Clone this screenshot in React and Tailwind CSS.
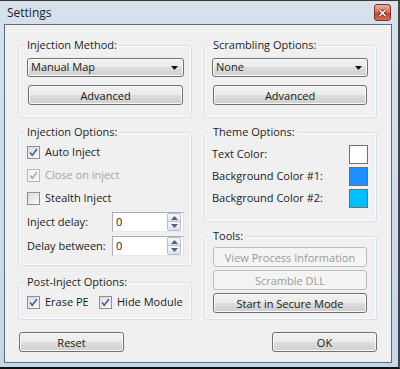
import React from 'react';

const btnBase =
    'flex items-center justify-center rounded-[3px] border text-[11px] leading-none';
const btnOn =
    'border-[#707070] text-[#1b1b1b] bg-[linear-gradient(#f2f2f2_0%,#ebebeb_50%,#dddddd_50%,#cfcfcf_100%)] shadow-[inset_0_0_0_1px_#fbfbfb]';
const btnOff = 'border-[#bcbcbc] text-[#9a9a9a] bg-[#f4f4f4]';

const Btn = ({ children, disabled, className = '' }) => (
    <button className={`${btnBase} ${disabled ? btnOff : btnOn} ${className}`}>{children}</button>
);

const Dropdown = ({ value }) => (
    <div className={`flex h-[19px] items-center justify-between rounded-[3px] border pl-[3px] pr-[5px] ${btnOn}`}>
        <span>{value}</span>
        <svg width="7" height="4" viewBox="0 0 7 4">
            <path d="M0 0h7L3.5 4z" fill="#111" />
        </svg>
    </div>
);

const Group = ({ title, className = '', children }) => (
    <div className={`relative rounded-[3px] border border-[#d5dfe5] shadow-[inset_0_0_0_1px_#fcfcfc] ${className}`}>
        <span className="absolute left-[6px] -top-[9px] bg-[#f0f0f0] px-[2px] leading-[16px] text-[#1e1e1e]">
            {title}
        </span>
        {children}
    </div>
);

const Check = ({ checked, disabled }) => (
    <span
        className={`flex h-[13px] w-[13px] shrink-0 items-center justify-center border ${
            disabled ? 'border-[#b8b8b8] bg-[#f4f4f4]' : 'border-[#8e8f8f] bg-[linear-gradient(135deg,#d8dadd,#fbfbfb)]'
        }`}
    >
        {checked && (
            <svg width="11" height="11" viewBox="0 0 11 11">
                <path
                    d="M2 5.5l2.3 2.8L9 2"
                    fill="none"
                    stroke={disabled ? '#a9a9a9' : '#4a5d98'}
                    strokeWidth="1.6"
                />
            </svg>
        )}
    </span>
);

const CheckRow = ({ label, checked, disabled, className = '' }) => (
    <div className={`flex items-center gap-[5px] ${className}`}>
        <Check checked={checked} disabled={disabled} />
        <span className={disabled ? 'text-[#a3a3a3]' : 'text-[#1b1b1b]'}>{label}</span>
    </div>
);

const Arrow = ({ up }) => (
    <svg width="7" height="4" viewBox="0 0 7 4">
        <path d={up ? 'M0 4h7L3.5 0z' : 'M0 0h7L3.5 4z'} fill="#4d6185" />
    </svg>
);

const Spinner = ({ label }) => (
    <div className="flex h-[20px] items-center">
        <span className="w-[85px] text-[#1b1b1b]">{label}</span>
        <div className="flex h-[20px] w-[72px] items-center justify-between border border-[#abadb3] border-b-[#e3e9ef] border-r-[#dbdfe6] bg-white pl-[3px] pr-[2px]">
            <span className="text-[#1b1b1b]">0</span>
            <div className="flex flex-col">
                <span className="flex h-[9px] w-[14px] items-center justify-center rounded-t-[2px] border border-[#b7bcc4] bg-[linear-gradient(#f6f8fa,#dde3ea)]">
                    <Arrow up />
                </span>
                <span className="flex h-[9px] w-[14px] items-center justify-center rounded-b-[2px] border border-t-0 border-[#b7bcc4] bg-[linear-gradient(#f6f8fa,#dde3ea)]">
                    <Arrow />
                </span>
            </div>
        </div>
    </div>
);

const Swatch = ({ label, color }) => (
    <div className="flex h-[19px] items-center justify-between">
        <span className="text-[#1b1b1b]">{label}</span>
        <span className={`h-[19px] w-[19px] border border-[#707070] ${color}`} />
    </div>
);

export default function App() {
    return (
        <div className="flex h-[369px] w-[400px] flex-col border-t border-b-2 border-r-2 border-t-[#3a3a3a] border-r-[#444] border-b-[#111] bg-[linear-gradient(180deg,#d6e1ec,#c5d7ea)] font-['Open_Sans',sans-serif] text-[11px]">
            <div className="flex h-[23px] items-center justify-between pl-[7px] pr-[7px]">
                <span className="text-[12px] text-[#222]">Settings</span>
                <span className="flex h-[17px] w-[17px] items-center justify-center rounded-[3px] border border-[#7e3329] bg-[linear-gradient(#eab0a4_0%,#d8755f_45%,#c4472f_55%,#d66e52_100%)]">
                    <svg width="9" height="8" viewBox="0 0 9 8">
                        <path d="M1.5 1l6 6M7.5 1l-6 6" stroke="#5a2018" strokeWidth="3" />
                        <path d="M1.5 1l6 6M7.5 1l-6 6" stroke="#fff" strokeWidth="1.6" />
                    </svg>
                </span>
            </div>
            <div className="mb-[4px] ml-[4px] mr-[6px] flex-1 border border-[#5f6c79] bg-[#f0f0f0] pl-[13px] pr-[14px] pt-[20px]">
                <div className="grid grid-cols-[174px_173px] gap-x-[12px]">
                    <div className="flex flex-col">
                        <Group title="Injection Method:" className="flex h-[73px] flex-col pl-[8px] pr-[7px] pt-[12px]">
                            <Dropdown value="Manual Map" />
                            <Btn className="mx-[1px] mt-[8px] h-[20px]">Advanced</Btn>
                        </Group>
                        <Group title="Injection Options:" className="mt-[14px] h-[134px] pl-[8px] pr-[7px] pt-[8px]">
                            <CheckRow label="Auto Inject" checked className="h-[23px]" />
                            <CheckRow label="Close on inject" checked disabled className="h-[23px]" />
                            <CheckRow label="Stealth Inject" className="h-[23px]" />
                            <div className="mt-[2px] flex flex-col gap-[4px]">
                                <Spinner label="Inject delay:" />
                                <Spinner label="Delay between:" />
                            </div>
                        </Group>
                        <Group title="Post-Inject Options:" className="mt-[16px] flex h-[38px] items-center pl-[8px] pt-[2px]">
                            <CheckRow label="Erase PE" checked className="w-[72px]" />
                            <CheckRow label="Hide Module" checked />
                        </Group>
                    </div>
                    <div className="flex flex-col">
                        <Group title="Scrambling Options:" className="flex h-[73px] flex-col pl-[7px] pr-[8px] pt-[12px]">
                            <Dropdown value="None" />
                            <Btn className="mx-[1px] mt-[8px] h-[20px]">Advanced</Btn>
                        </Group>
                        <Group title="Theme Options:" className="mt-[14px] flex h-[90px] flex-col gap-[3px] pl-[7px] pr-[8px] pt-[12px]">
                            <Swatch label="Text Color:" color="bg-white" />
                            <Swatch label="Background Color #1:" color="bg-[#1e90ff]" />
                            <Swatch label="Background Color #2:" color="bg-[#00bfff]" />
                        </Group>
                        <Group title="Tools:" className="mt-[14px] flex h-[84px] flex-col gap-[3px] pl-[8px] pr-[9px] pt-[10px]">
                            <Btn disabled className="h-[20px]">View Process Information</Btn>
                            <Btn disabled className="h-[20px]">Scramble DLL</Btn>
                            <Btn className="h-[20px]">Start in Secure Mode</Btn>
                        </Group>
                    </div>
                </div>
                <div className="mt-[12px] flex justify-between">
                    <Btn className="ml-[1px] h-[20px] w-[105px]">Reset</Btn>
                    <Btn className="h-[20px] w-[105px]">OK</Btn>
                </div>
            </div>
        </div>
    );
}
